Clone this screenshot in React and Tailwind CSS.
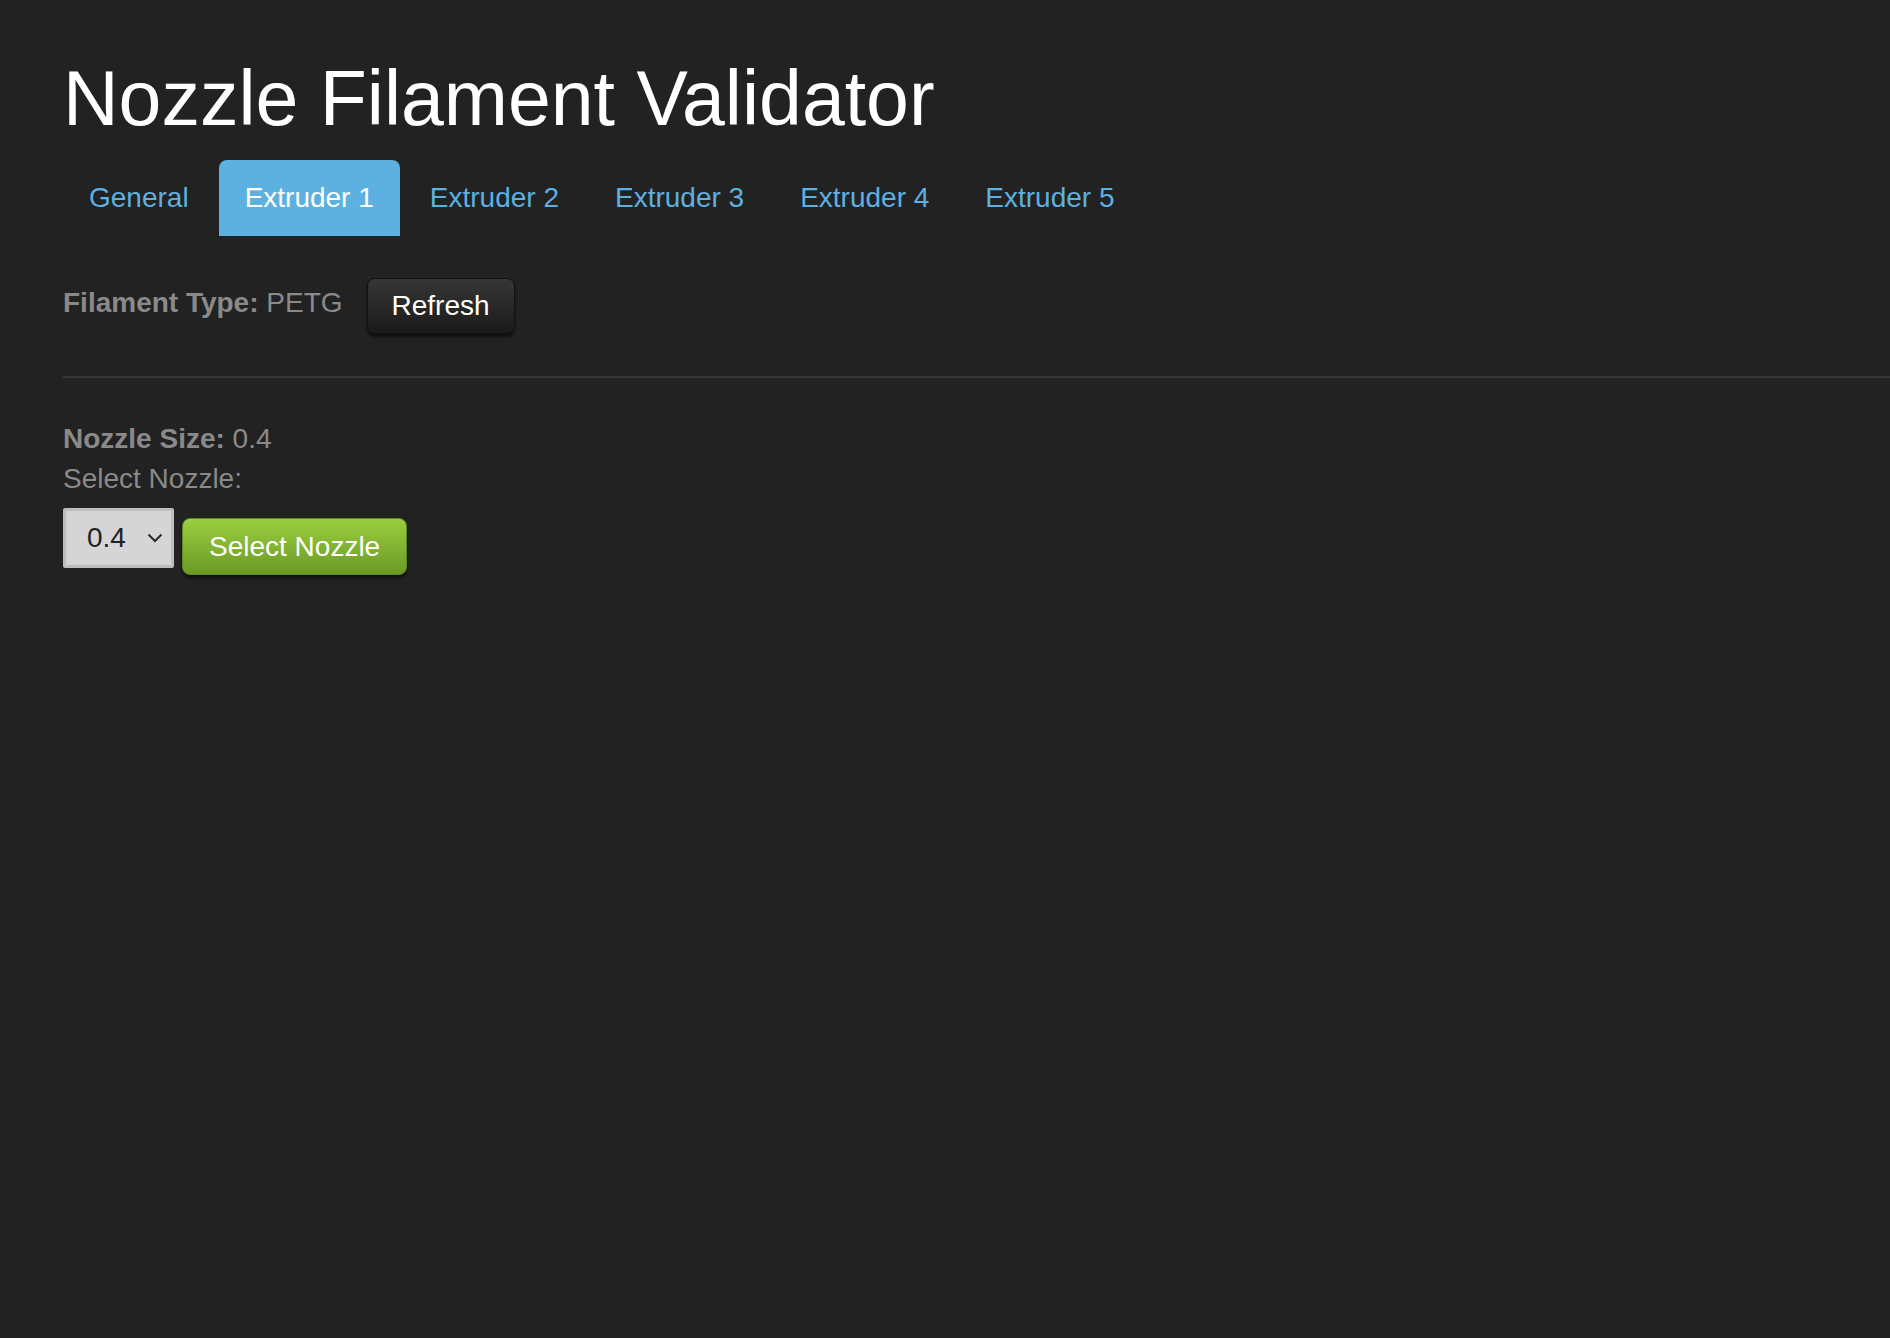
import { useState } from "react";

const tabs = ["General", "Extruder 1", "Extruder 2", "Extruder 3", "Extruder 4", "Extruder 5"];

export default function App() {
  const [active, setActive] = useState(1);
  const [nozzle, setNozzle] = useState("0.4");

  return (
    <div
      className="min-h-screen bg-[#222222] pl-[63px] pt-[58px]"
      style={{ fontFamily: '"Liberation Sans", Arial, sans-serif' }}
    >
      {/* Title */}
      <h1 className="text-[77px] leading-[80px] text-white">Nozzle Filament Validator</h1>

      {/* Tabs */}
      <ul className="mt-[22px] flex text-[28px] leading-[44px]">
        {tabs.map((t, i) => (
          <li key={t} className="mr-[4px]">
            <button
              onClick={() => setActive(i)}
              className={
                i === active
                  ? "rounded-t-[8px] bg-[#5db1e0] px-[26px] py-[16px] text-white"
                  : "rounded-t-[8px] px-[26px] py-[16px] text-[#5db0e0]"
              }
            >
              {t}
            </button>
          </li>
        ))}
      </ul>

      {/* Filament */}
      <div className="mt-[42px] flex items-start text-[28px] leading-[40px] text-[#8a8a8a]">
        <p className="mt-[5px]">
          <span className="font-bold">Filament Type:</span> PETG
        </p>
        <button className="ml-[24px] h-[56px] rounded-[8px] border border-[#111111] bg-gradient-to-b from-[#363636] to-[#1b1b1b] px-[24px] text-white shadow-[0_3px_3px_rgba(0,0,0,0.55)]">
          Refresh
        </button>
      </div>

      <hr className="mt-[42px] border-t-2 border-[#373737]" />

      {/* Nozzle */}
      <div className="mt-[41px] text-[28px] leading-[40px] text-[#8a8a8a]">
        <p>
          <span className="font-bold">Nozzle Size:</span> {nozzle}
        </p>
        <p>Select Nozzle:</p>
        <div className="mt-[9px] flex items-start">
          <div className="relative h-[60px] w-[111px]">
            <select
              value={nozzle}
              onChange={(e) => setNozzle(e.target.value)}
              className="h-full w-full appearance-none rounded-[2px] border-[3px] border-[#bdbdbd] bg-[#d5d5d5] pl-[21px] text-[28px] text-[#222222] outline-none"
            >
              <option>0.2</option>
              <option>0.4</option>
              <option>0.6</option>
              <option>0.8</option>
            </select>
            <svg
              className="pointer-events-none absolute left-[84px] top-[25px]"
              width="16"
              height="10"
              viewBox="0 0 16 10"
              fill="none"
            >
              <path d="M1.5 1.5 L8 8 L14.5 1.5" stroke="#2a2a2a" strokeWidth="2" />
            </svg>
          </div>
          <button className="ml-[8px] mt-[10px] h-[57px] rounded-[8px] border border-[#5d8a1c] bg-gradient-to-b from-[#9bce40] to-[#6a9a24] px-[26px] text-white shadow-[0_3px_3px_rgba(0,0,0,0.5)]">
            Select Nozzle
          </button>
        </div>
      </div>
    </div>
  );
}
